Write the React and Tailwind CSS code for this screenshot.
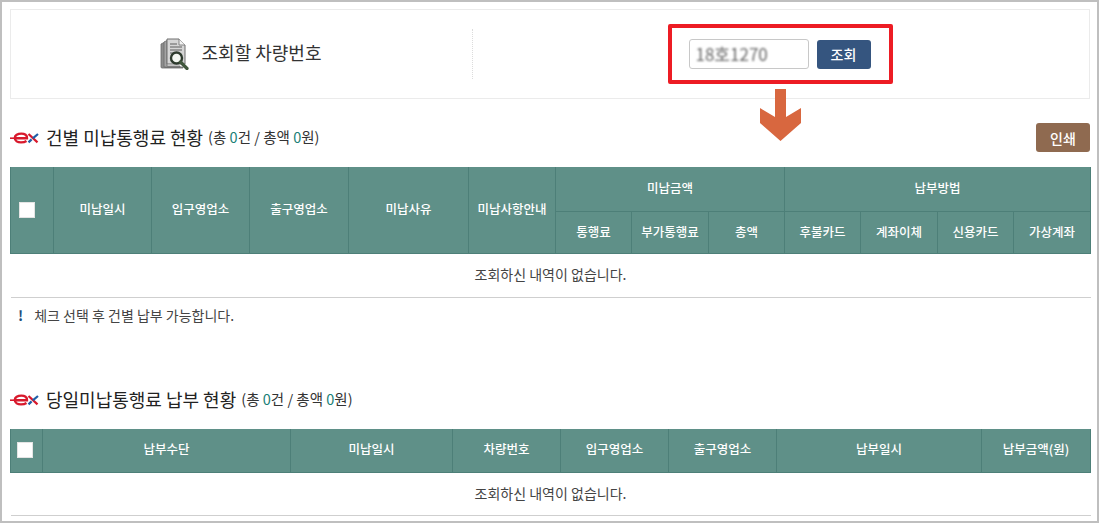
function ExLogo() {
  return (
    <svg width="29" height="12" viewBox="0 0 29 12" className="shrink-0">
      <path d="M0 6.2 H7" stroke="#d8192c" strokeWidth="1.6" />
      <path d="M6 6.2 H17 C17.4 3 14.6 1.6 11.4 1.6 C7.6 1.6 4.8 3.4 4.8 6 C4.8 8.8 7.6 10.4 11 10.4 C13.2 10.4 15 10 16.5 9" fill="none" stroke="#d8192c" strokeWidth="2.4" />
      <path d="M18.5 2 L27.5 10.4" stroke="#d8192c" strokeWidth="2.2" />
      <path d="M28 2 L22.8 6.4 M21.6 7.4 L18.5 10.4" stroke="#1f5fa8" strokeWidth="2.2" />
    </svg>
  );
}

function DocIcon() {
  return (
    <svg width="30" height="32" viewBox="0 0 30 32" className="shrink-0">
      <path d="M1 6 L5 4 L5 29 L23 29 L23 30 L2 30 Q1 30 1 29 Z" fill="#8c8c8c" stroke="#6b6b6b" strokeWidth="0.8" />
      <path d="M4 4 L7 2.5 L7 28 L20 28 L20 29 L4 29 Z" fill="#a3a3a3" stroke="#6b6b6b" strokeWidth="0.8" />
      <path d="M7 1 L19 1 L25 7 L25 26 L7 26 Z" fill="#d6d6d6" stroke="#6e6e6e" strokeWidth="1" />
      <path d="M19 1 L19 7 L25 7" fill="#f2f2f2" stroke="#6e6e6e" strokeWidth="0.8" />
      <path d="M10 6 H17 M10 9 H22 M10 12 H22 M10 15 H14" stroke="#5f5f5f" strokeWidth="1" />
      <circle cx="16.5" cy="20" r="5.5" fill="#f4f7f2" stroke="#2e3b2e" strokeWidth="2.4" />
      <path d="M20.5 24 L27 30.5" stroke="#41573d" strokeWidth="3.2" strokeLinecap="round" />
    </svg>
  );
}

function Checkbox() {
  return <span className="block w-4 h-4 bg-white border border-[#e4e4e4]" />;
}

function Th({ children, className = "", ...rest }) {
  return (
    <th {...rest} className={"border-x border-b border-[#4d7f78] bg-[#5f9088] text-white text-[12.5px] font-medium p-0 " + className}>
      {children}
    </th>
  );
}

function Empty({ span, h }) {
  return (
    <tr>
      <td colSpan={span} className={"text-center text-sm text-[#444] border-b border-[#cfcfcf] p-0 " + h}>조회하신 내역이 없습니다.</td>
    </tr>
  );
}

function Title({ children }) {
  return (
    <div className="flex items-center">
      <ExLogo />
      <span className="ml-[7px] text-lg leading-[24px] text-[#222] -translate-y-[1px]">{children}</span>
      <span className="ml-[5px] text-[14.5px] leading-[24px] text-[#333] -translate-y-[1px]">
        (총 <span className="text-[#1b7f78]">0</span>건 / 총액 <span className="text-[#1b7f78]">0</span>원)
      </span>
    </div>
  );
}

export default function App() {
  return (
    <div
      className="relative w-[1099px] h-[523px] overflow-hidden bg-white border-2 border-[#bfbfbf] pl-2 pr-[7px] pt-[7px]"
      style={{ fontFamily: '"Noto Sans CJK KR", "Noto Sans", sans-serif' }}
    >
      <div className="flex items-center h-[90px] border border-[#ebebeb]">
        <div className="w-[462px] h-[50px] flex items-center justify-center gap-[12px] pr-[2px] border-r border-dotted border-[#dcdcdc]">
          <DocIcon />
          <span className="text-lg leading-[24px] text-[#333] -translate-y-[2px]">조회할 차량번호</span>
        </div>
        <div className="flex-1 flex items-center justify-center gap-2 pr-[3px]">
          <div className="w-[120px] h-[30px] flex items-center pl-[6px] border border-[#c8c8c8] rounded-[3px] bg-white">
            <span className="text-[17px] leading-[24px] text-[#666] blur-[1px]">18호1270</span>
          </div>
          <button className="w-[54px] h-[29px] rounded-[3px] bg-[#35557f] text-white text-sm font-medium">조회</button>
        </div>
      </div>

      <div className="flex items-center justify-between mt-6 h-[29px]">
        <Title>건별 미납통행료 현황</Title>
        <button className="w-[54px] h-[29px] rounded-[3px] bg-[#8f6a50] text-white text-sm font-medium">인쇄</button>
      </div>

      <table className="table-fixed border-collapse w-[1080px] mt-[15px]">
        <colgroup>
          <col className="w-[43px]" />
          <col className="w-[98px]" />
          <col className="w-[98px]" />
          <col className="w-[99px]" />
          <col className="w-[120px]" />
          <col className="w-[87px]" />
          <col className="w-[76px]" />
          <col className="w-[77px]" />
          <col className="w-[76px]" />
          <col className="w-[76px]" />
          <col className="w-[77px]" />
          <col className="w-[76px]" />
          <col className="w-[77px]" />
        </colgroup>
        <thead>
          <tr className="h-[44px]">
            <Th rowSpan={2}><div className="pl-[8px]"><Checkbox /></div></Th>
            <Th rowSpan={2} className="pb-[1px]">미납일시</Th>
            <Th rowSpan={2} className="pb-[1px]">입구영업소</Th>
            <Th rowSpan={2} className="pb-[1px]">출구영업소</Th>
            <Th rowSpan={2} className="pb-[1px]">미납사유</Th>
            <Th rowSpan={2} className="pb-[1px]">미납사항안내</Th>
            <Th colSpan={3}>미납금액</Th>
            <Th colSpan={4}>납부방법</Th>
          </tr>
          <tr className="h-[42px]">
            <Th>통행료</Th>
            <Th>부가통행료</Th>
            <Th>총액</Th>
            <Th>후불카드</Th>
            <Th>계좌이체</Th>
            <Th>신용카드</Th>
            <Th>가상계좌</Th>
          </tr>
        </thead>
        <tbody>
          <Empty span={13} h="h-[44px] pb-[2px]" />
        </tbody>
      </table>

      <div className="flex items-center gap-[11px] mt-[7px] pl-[8px] h-[20px] text-sm text-[#444]">
        <span className="font-bold text-[#1c4f7c]">!</span>
        <span>체크 선택 후 건별 납부 가능합니다.</span>
      </div>

      <div className="mt-[63px] h-[24px] flex items-center">
        <Title>당일미납통행료 납부 현황</Title>
      </div>

      <table className="table-fixed border-collapse w-[1080px] mt-[17px]">
        <colgroup>
          <col className="w-[32px]" />
          <col className="w-[248px]" />
          <col className="w-[162px]" />
          <col className="w-[108px]" />
          <col className="w-[108px]" />
          <col className="w-[108px]" />
          <col className="w-[205px]" />
          <col className="w-[109px]" />
        </colgroup>
        <thead>
          <tr className="h-[44px]">
            <Th><div className="pl-[6px]"><Checkbox /></div></Th>
            <Th className="pb-[2px]">납부수단</Th>
            <Th className="pb-[2px]">미납일시</Th>
            <Th className="pb-[2px]">차량번호</Th>
            <Th className="pb-[2px]">입구영업소</Th>
            <Th className="pb-[2px]">출구영업소</Th>
            <Th className="pb-[2px]">납부일시</Th>
            <Th className="pb-[2px]">납부금액(원)</Th>
          </tr>
        </thead>
        <tbody>
          <Empty span={8} h="h-[43px] pb-[3px]" />
        </tbody>
      </table>

      <div className="absolute left-[666px] top-[22px] w-[225px] h-[60px] border-[4px] border-[#ed1c24] rounded-[2px] pointer-events-none" />
      <svg className="absolute left-[758px] top-[87px]" width="42" height="52" viewBox="0 0 42 52">
        <path d="M15 0 H26 V28 L41 19 V34 L20.5 52 L0 34 V19 L15 28 Z" fill="#d8673f" />
      </svg>
    </div>
  );
}
